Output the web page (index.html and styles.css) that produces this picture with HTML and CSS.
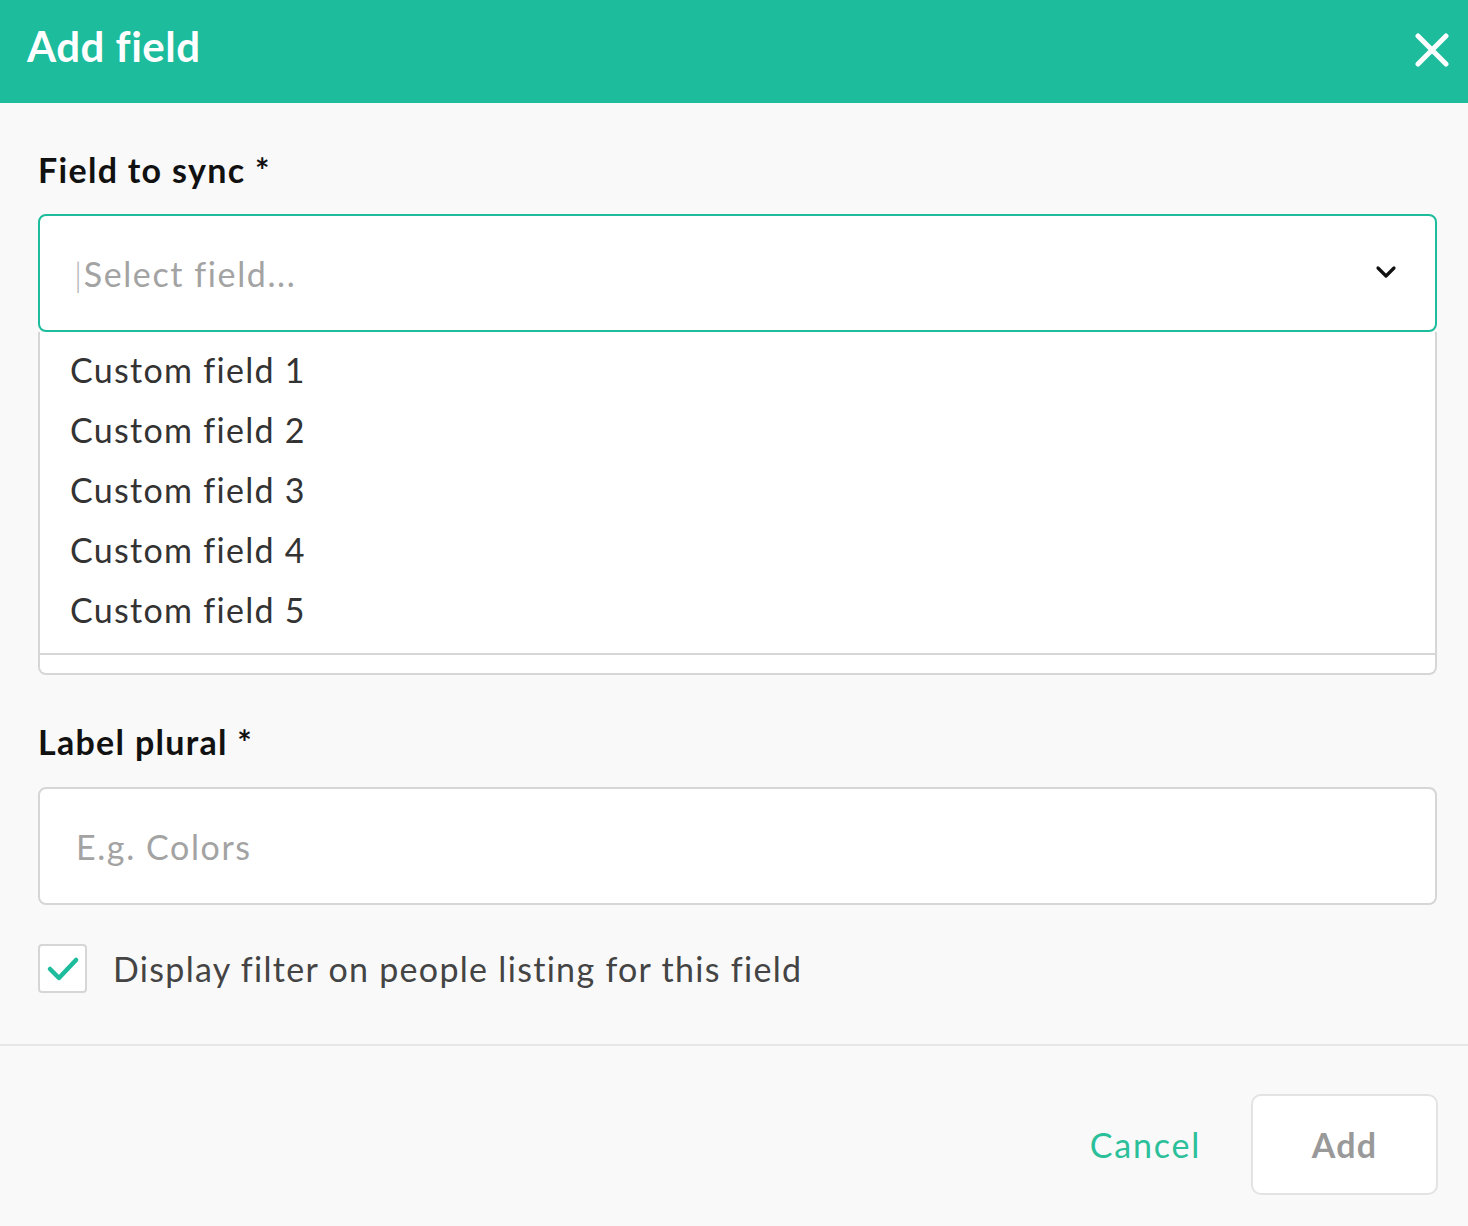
FILE: index.html
```html
<!DOCTYPE html>
<html lang="en">
<head>
    <meta charset="UTF-8">
    <title>Add field</title>
    <link rel="stylesheet" href="styles.css">
</head>
<body>
<div class="modal">
    <div class="modal-head">
        <h1>Add field</h1>
        <svg class="close" width="34" height="34" viewBox="0 0 34 34">
            <path d="M3 3L31 31M31 3L3 31" stroke="#fff" stroke-width="5" stroke-linecap="round"/>
        </svg>
    </div>

    <div class="modal-body">
        <label class="lbl">Field to sync *</label>
        <div class="select-wrap">
            <div class="select">
                <span class="ph"><span class="caret">|</span>Select field...</span>
                <svg class="chev" width="22" height="14" viewBox="0 0 22 14">
                    <path d="M3 3L11 11L19 3" fill="none" stroke="#111" stroke-width="3.2" stroke-linecap="round" stroke-linejoin="round"/>
                </svg>
            </div>
            <div class="menu">
                <ul class="options">
                    <li>Custom field 1</li>
                    <li>Custom field 2</li>
                    <li>Custom field 3</li>
                    <li>Custom field 4</li>
                    <li>Custom field 5</li>
                </ul>
                <div class="menu-foot"></div>
            </div>
        </div>

        <label class="lbl lbl-2">Label plural *</label>
        <div class="input">
            <span class="ph">E.g. Colors</span>
        </div>

        <div class="check-row">
            <span class="check">
                <svg width="34" height="28" viewBox="0 0 34 28">
                    <path d="M4 14L13 23L30 5" fill="none" stroke="#1dbc9c" stroke-width="4.5" stroke-linecap="round" stroke-linejoin="round"/>
                </svg>
            </span>
            <span class="check-txt">Display filter on people listing for this field</span>
        </div>
    </div>

    <div class="modal-foot">
        <span class="cancel">Cancel</span>
        <span class="btn-add">Add</span>
    </div>
</div>
</body>
</html>
```

FILE: styles.css
```css
body,html{
    margin: 0;
    padding: 0;
    background-color: #f9f9f9;
}
body{
    font-family: Lato, "Liberation Sans", sans-serif;
    color: #333;
    font-variant-ligatures: none;
    letter-spacing: 1.3px;
}
.modal-head{
    height: 103px;
    box-sizing: border-box;
    background-color: #1dbc9c;
    display: flex;
    align-items: center;
    justify-content: space-between;
    padding: 0 19px 8px 27px;
}
.modal-head h1{
    margin: 0;
    color: #fff;
    font-size: 42px;
    font-weight: 700;
    letter-spacing: 0.5px;
    margin-top: -4px;
}
.close{
    margin-top: 4px;
}
.modal-body{
    padding: 47px 31px 51px 38px;
    border-bottom: 2px solid #e6e6e6;
}
.lbl{
    display: block;
    font-size: 34px;
    line-height: 40px;
    font-weight: 700;
    color: #111;
    margin-bottom: 24px;
}
.lbl-2{
    margin-top: 47px;
    margin-bottom: 25px;
}
.ph{
    font-size: 34px;
    color: #a3a3a3;
    letter-spacing: 1.6px;
}
.caret{
    color: #b5b5b5;
    font-weight: 300;
}
.select{
    height: 114px;
    border: 2px solid #1dbc9c;
    border-radius: 8px;
    background-color: #fff;
    display: flex;
    align-items: center;
    justify-content: space-between;
    padding: 0 38px 0 34px;
}
.chev{
    margin-top: -2px;
}
.menu{
    border: 2px solid #d6d6d6;
    border-top: none;
    border-radius: 0 0 8px 8px;
    background-color: #fff;
    padding-bottom: 18px;
}
.options{
    list-style: none;
    margin: 0;
    padding: 8px 0 13px 30px;
    border-bottom: 2px solid #d6d6d6;
}
.options li{
    height: 60px;
    line-height: 60px;
    font-size: 34px;
    color: #333;
}
.input{
    height: 114px;
    border: 2px solid #d6d6d6;
    border-radius: 8px;
    background-color: #fff;
    display: flex;
    align-items: center;
    padding-left: 36px;
}
.check-row{
    display: flex;
    align-items: center;
    margin-top: 39px;
    gap: 26px;
}
.check{
    width: 45px;
    height: 45px;
    border: 2px solid #d6d6d6;
    border-radius: 4px;
    background-color: #fff;
    display: flex;
    align-items: center;
    justify-content: center;
}
.check-txt{
    font-size: 34px;
    color: #444;
}
.modal-foot{
    display: flex;
    justify-content: flex-end;
    align-items: center;
    padding: 48px 30px 30px 0;
    gap: 50px;
}
.cancel{
    font-size: 34px;
    color: #2bbf9a;
    letter-spacing: 1.8px;
}
.btn-add{
    width: 183px;
    height: 97px;
    border: 2px solid #e3e3e3;
    border-radius: 10px;
    background-color: #fff;
    display: flex;
    align-items: center;
    justify-content: center;
    font-size: 34px;
    font-weight: 700;
    color: #999;
}
```
